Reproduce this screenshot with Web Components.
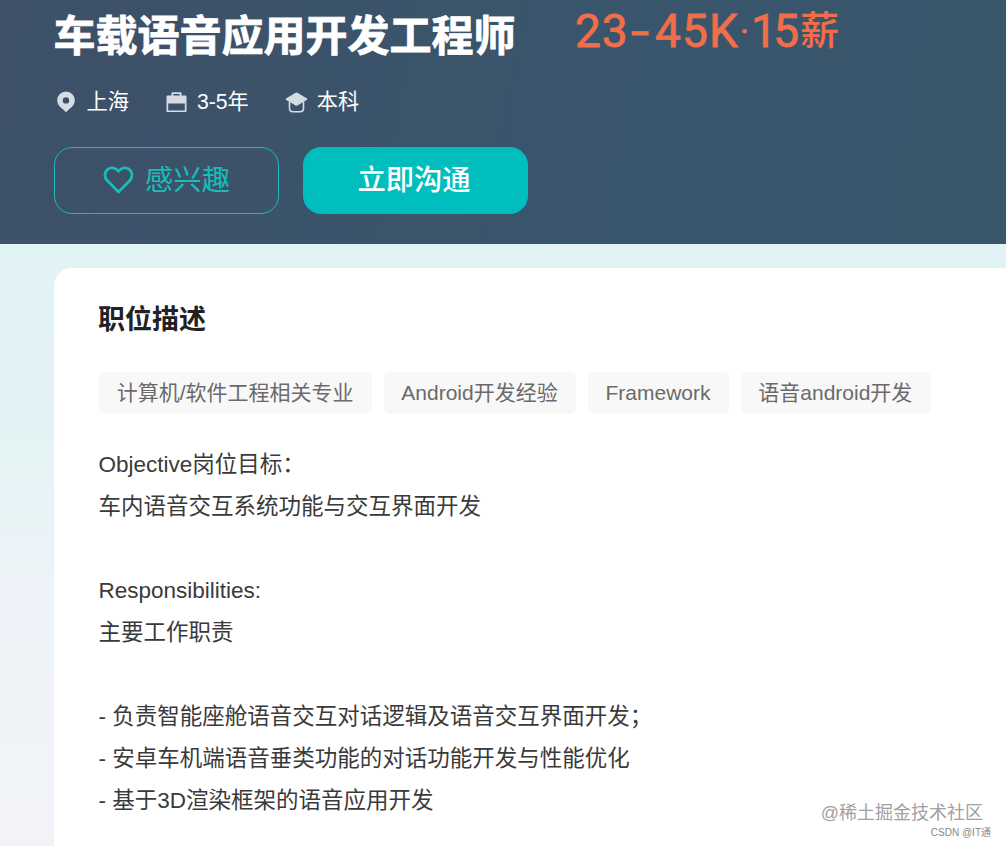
<!DOCTYPE html>
<html lang="zh-CN">
<head>
<meta charset="utf-8">
<title>车载语音应用开发工程师</title>
<style>
  body {
    margin: 0;
    width: 1006px;
    height: 846px;
    overflow: hidden;
    font-family: "Liberation Sans", "Noto Sans CJK SC", sans-serif;
  }
</style>
</head>
<body>
<job-page>
  <job-banner slot="banner" name="车载语音应用开发工程师">
    <job-salary slot="salary"></job-salary>
    <job-fact slot="facts" icon="pin">上海</job-fact>
    <job-fact slot="facts" icon="case">3-5年</job-fact>
    <job-fact slot="facts" icon="cap">本科</job-fact>
    <job-button slot="actions" icon="heart">感兴趣</job-button>
    <job-button slot="actions" primary>立即沟通</job-button>
  </job-banner>
  <job-card label="职位描述">
    <job-tag slot="tags">计算机/软件工程相关专业</job-tag>
    <job-tag slot="tags">Android开发经验</job-tag>
    <job-tag slot="tags">Framework</job-tag>
    <job-tag slot="tags">语音android开发</job-tag>
    <job-line>Objective岗位目标：</job-line>
    <job-line>车内语音交互系统功能与交互界面开发</job-line>
    <job-line></job-line>
    <job-line>Responsibilities:</job-line>
    <job-line>主要工作职责</job-line>
    <job-line></job-line>
    <job-line>- 负责智能座舱语音交互对话逻辑及语音交互界面开发；</job-line>
    <job-line>- 安卓车机端语音垂类功能的对话功能开发与性能优化</job-line>
    <job-line>- 基于3D渲染框架的语音应用开发</job-line>
  </job-card>
  <job-watermark slot="mark"></job-watermark>
</job-page>

<script>
const ICONS = {
  pin: `<svg width="18" height="22" viewBox="0 0 18 22"><path fill="#d5dce4" fill-rule="evenodd" d="M9 .5a8.8 8.8 0 0 0-8.8 8.8c0 4.6 3.4 7.2 6 9.2L9 21.3l2.8-2.8c2.6-2 6-4.6 6-9.2A8.8 8.8 0 0 0 9 .5zm0 5.7a3.2 3.2 0 1 1 0 6.4 3.2 3.2 0 0 1 0-6.4z"/></svg>`,
  case: `<svg width="21" height="21" viewBox="0 0 21 21"><path fill="#d5dce4" fill-rule="evenodd" d="M5.500 3.500V1.300Q5.500.3 6.500.3h8q1 0 1 1V3.500H19.300q1.200 0 1.200 1.200v14.200q0 1.200-1.200 1.200H1.700Q.5 20.100.5 18.900V4.700Q.5 3.500 1.700 3.500zM7.300 3.500h6.400V2H7.300zM2.200 11.500v6.900h16.600v-6.900z"/></svg>`,
  cap: `<svg width="23" height="21" viewBox="0 0 23 21"><path fill="#d5dce4" d="M10.600.8q.9-.5 1.800 0l9.600 5.700q.8.600 0 1.200l-9.600 5.800q-.9.500-1.800 0L1 7.700q-.8-.6 0-1.200z"/><path fill="none" stroke="#d5dce4" stroke-width="1.600" d="M4.500 9.500v6.700q0 3.500 3.500 3.500h7q3.500 0 3.500-3.500V9.500"/></svg>`,
  heart: `<svg width="31" height="28" viewBox="0 0 32 29"><path fill="none" stroke="#19bcb8" stroke-width="2.900" stroke-linejoin="round" d="M16 27L4.500 15.200C1 11.500 1.300 6.500 4.500 3.700 8 .8 12.800 1.500 16 5.400c3.200-3.900 8-4.600 11.500-1.700 3.200 2.800 3.500 7.800 0 11.500z"/></svg>`
};

class JobPage extends HTMLElement {
  constructor() {
    super();
    this.attachShadow({ mode: 'open' });
  }

  connectedCallback() {
    this.shadowRoot.innerHTML = `
      <style>
        :host {
          position: relative;
          display: flex;
          flex-direction: column;
          height: 846px;
          background: linear-gradient(180deg, #e2f3f5 244px, #e4f4f5 440px, #edf3f8 580px, #f2f3f8 100%);
        }
        main {
          flex: 1;
          display: flex;
          padding: 24px 0 0 54px;
        }
      </style>
      <slot name="banner"></slot>
      <main><slot></slot></main>
      <slot name="mark"></slot>
    `;
  }
}

class JobBanner extends HTMLElement {
  constructor() {
    super();
    this.attachShadow({ mode: 'open' });
  }

  connectedCallback() {
    this.shadowRoot.innerHTML = `
      <style>
        :host {
          display: flex;
          flex-direction: column;
          box-sizing: border-box;
          height: 244px;
          padding-left: 54px;
          background: linear-gradient(100deg, #3d5068, #3a556b 50%, #39566b);
        }
        .head {
          display: flex;
          height: 72px;
        }
        h1 {
          margin: 0 0 0 -0.5px;
          width: 521.5px;
          color: #fff;
          font-size: 42px;
          line-height: 74px;
          font-weight: 700;
          -webkit-text-stroke: 0.8px #fff;
          white-space: nowrap;
        }
        .facts {
          display: flex;
          height: 60px;
        }
        .actions {
          display: flex;
          gap: 24px;
          padding-top: 15px;
        }
      </style>
      <div class="head">
        <h1>${this.getAttribute('name')}</h1>
        <slot name="salary"></slot>
      </div>
      <div class="facts"><slot name="facts"></slot></div>
      <div class="actions"><slot name="actions"></slot></div>
    `;
  }
}

class JobSalary extends HTMLElement {
  constructor() {
    super();
    this.attachShadow({ mode: 'open' });
  }

  connectedCallback() {
    this.shadowRoot.innerHTML = `
      <style>
        :host {
          display: flex;
          height: 62px;
          color: #f26d49;
          font: 400 46px/62px Roboto, "Noto Sans CJK SC", sans-serif;
          -webkit-text-stroke: 0.8px #f26d49;
          white-space: nowrap;
        }
        .from { width: 56px; letter-spacing: 1px; }
        .dash { width: 24px; transform: scaleX(1.45); transform-origin: 0 0; }
        .to { width: 85px; letter-spacing: 1.2px; }
        .dot { width: 11px; font-size: 34px; }
        .months { width: 49px; letter-spacing: -3.5px; }
        .unit { font-size: 39px; font-weight: 500; -webkit-text-stroke: 0; }
      </style>
      <span class="from">23</span><span class="dash">-</span><span class="to">45K</span><span class="dot">·</span><span class="months">15</span><span class="unit">薪</span>
    `;
  }
}

class JobFact extends HTMLElement {
  constructor() {
    super();
    this.attachShadow({ mode: 'open' });
  }

  connectedCallback() {
    this.shadowRoot.innerHTML = `
      <style>
        :host {
          display: flex;
          align-items: center;
          margin-right: 35.5px;
          color: #fff;
          font-size: 21.2px;
          line-height: 60px;
        }
        .icon {
          display: flex;
          justify-content: center;
          width: 24px;
          margin-right: 8.5px;
        }
      </style>
      <span class="icon">${ICONS[this.getAttribute('icon')]}</span>
      <slot></slot>
    `;
  }
}

class JobButton extends HTMLElement {
  constructor() {
    super();
    this.attachShadow({ mode: 'open' });
  }

  connectedCallback() {
    const icon = ICONS[this.getAttribute('icon')] || '';

    this.shadowRoot.innerHTML = `
      <style>
        :host { display: block; }
        button {
          display: flex;
          align-items: center;
          justify-content: center;
          gap: 11px;
          box-sizing: border-box;
          width: 225px;
          height: 67px;
          padding: 0;
          border: 1px solid #19bcb8;
          border-radius: 18px;
          background: none;
          color: #19bcb8;
          font: 28.3px/65px "Liberation Sans", "Noto Sans CJK SC", sans-serif;
        }
        svg { margin-top: -2px; }
        :host([primary]) button {
          padding-right: 3px;
          border-color: #00bebd;
          background: #00bebd;
          color: #fff;
          font-weight: 500;
        }
      </style>
      <button>${icon}<slot></slot></button>
    `;
  }
}

class JobCard extends HTMLElement {
  constructor() {
    super();
    this.attachShadow({ mode: 'open' });
  }

  connectedCallback() {
    this.shadowRoot.innerHTML = `
      <style>
        :host {
          flex: 1;
          display: block;
          padding: 32px 0 0 45px;
          border-radius: 18px 0 0 0;
          background: #fff;
        }
        h2 {
          margin: 0 0 32px -1px;
          color: #222;
          font-size: 27px;
          line-height: 40px;
        }
        .tags {
          display: flex;
          gap: 11.8px;
          margin-bottom: 30px;
        }
      </style>
      <h2>${this.getAttribute('label')}</h2>
      <div class="tags"><slot name="tags"></slot></div>
      <slot></slot>
    `;
  }
}

class JobTag extends HTMLElement {
  constructor() {
    super();
    this.attachShadow({ mode: 'open' });
  }

  connectedCallback() {
    this.shadowRoot.innerHTML = `
      <style>
        :host {
          display: block;
          padding: 0 18.300px 0 17.700px;
          border-radius: 6px;
          background: #f8f8f8;
          color: #6a6a6a;
          font-size: 21px;
          line-height: 42px;
          white-space: nowrap;
        }
      </style>
      <slot></slot>
    `;
  }
}

class JobLine extends HTMLElement {
  constructor() {
    super();
    this.attachShadow({ mode: 'open' });
  }

  connectedCallback() {
    this.shadowRoot.innerHTML = `
      <style>
        :host {
          display: block;
          height: 42px;
          margin-left: -0.5px;
          color: #3a3a3a;
          font-size: 22.5px;
          line-height: 42px;
          white-space: nowrap;
        }
      </style>
      <slot></slot>
    `;
  }
}

class JobWatermark extends HTMLElement {
  constructor() {
    super();
    this.attachShadow({ mode: 'open' });
  }

  connectedCallback() {
    // sits over the card in the bottom right corner
    this.shadowRoot.innerHTML = `
      <style>
        :host {
          position: absolute;
          right: 15px;
          bottom: 6px;
          display: flex;
          flex-direction: column;
          align-items: flex-end;
          color: #a0a0a0;
          white-space: nowrap;
        }
        .site { margin-right: 8px; font-size: 18px; line-height: 24px; }
        .author { color: #888; font-size: 10px; line-height: 15px; }
      </style>
      <span class="site">@稀土掘金技术社区</span>
      <span class="author">CSDN @IT通</span>
    `;
  }
}

customElements.define('job-page', JobPage);
customElements.define('job-banner', JobBanner);
customElements.define('job-salary', JobSalary);
customElements.define('job-fact', JobFact);
customElements.define('job-button', JobButton);
customElements.define('job-card', JobCard);
customElements.define('job-tag', JobTag);
customElements.define('job-line', JobLine);
customElements.define('job-watermark', JobWatermark);
</script>
</body>
</html>
